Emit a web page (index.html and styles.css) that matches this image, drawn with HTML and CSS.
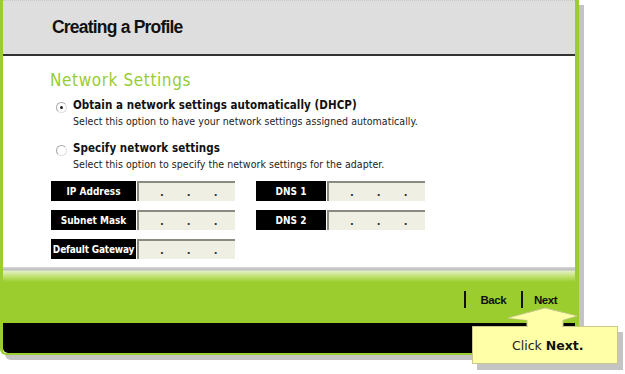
FILE: index.html
```html
<!DOCTYPE html>
<html lang="en">
<head>
    <meta charset="UTF-8">
    <title>Creating a Profile</title>
    <link rel="stylesheet" href="styles.css">
</head>
<body>
    <div class="window">
        <div class="header">
            <h1>Creating a Profile</h1>
        </div>
        <div class="content">
            <h2>Network Settings</h2>
            <div class="option">
                <span class="radio checked"></span>
                <div>
                    <div class="opt-title">Obtain a network settings automatically (DHCP)</div>
                    <div class="opt-desc">Select this option to have your network settings assigned automatically.</div>
                </div>
            </div>
            <div class="option">
                <span class="radio"></span>
                <div>
                    <div class="opt-title">Specify network settings</div>
                    <div class="opt-desc">Select this option to specify the network settings for the adapter.</div>
                </div>
            </div>
            <div class="fields">
                <div class="field">
                    <span class="label wide">IP Address</span>
                    <span class="ip"><i>.</i><i>.</i><i>.</i></span>
                </div>
                <div class="field">
                    <span class="label narrow">DNS 1</span>
                    <span class="ip"><i>.</i><i>.</i><i>.</i></span>
                </div>
                <div class="field">
                    <span class="label wide">Subnet Mask</span>
                    <span class="ip"><i>.</i><i>.</i><i>.</i></span>
                </div>
                <div class="field">
                    <span class="label narrow">DNS 2</span>
                    <span class="ip"><i>.</i><i>.</i><i>.</i></span>
                </div>
                <div class="field">
                    <span class="label wide tight">Default Gateway</span>
                    <span class="ip"><i>.</i><i>.</i><i>.</i></span>
                </div>
            </div>
        </div>
        <div class="footer">
            <div class="nav">
                <span class="sep"></span>
                <a class="nav-link">Back</a>
                <span class="sep"></span>
                <a class="nav-link">Next</a>
            </div>
        </div>
        <div class="bottom-bar"></div>
    </div>

    <!-- callout pointing at the Next button -->
    <svg class="callout-arrow" width="80" height="24" viewBox="0 0 80 24">
        <polygon points="37,1 0,11 19,13 19,22 55,22 55,13 69,9" fill="#ffffa8" stroke="#c8c890" stroke-width="1"/>
    </svg>
    <div class="callout">Click <b>Next.</b></div>
    <svg class="callout-arrow fill-only" width="80" height="24" viewBox="0 0 80 24">
        <polygon points="37,2 2,11 20,13 20,24 54,24 54,13 67,9" fill="#ffffa8"/>
    </svg>
</body>
</html>
```

FILE: styles.css
```css
* {
    margin: 0;
    padding: 0;
    box-sizing: border-box;
}

body {
    background: #fff;
    font-family: 'DejaVu Sans', Verdana, sans-serif;
    position: relative;
    width: 625px;
    height: 374px;
    overflow: hidden;
}

.window {
    width: 579px;
    border-left: 3px solid #9ccd2f;
    border-right: 4px solid #9ccd2f;
    border-bottom: 2px solid #9ccd2f;
    border-bottom-left-radius: 6px;
    box-shadow: 5px 5px 0 #c4c4c4;
    background: #fff;
    overflow: hidden;
}

.header {
    height: 56px;
    background: #dedede;
    border-top: 1px dotted #c8c8c8;
    border-bottom: 2px solid #333;
    padding: 16px 0 0 49px;
}

h1 {
    font-family: 'Liberation Sans', Arial, sans-serif;
    font-size: 17.5px;
    letter-spacing: -0.8px;
    font-weight: bold;
    color: #111;
}

.content {
    height: 211px;
    padding: 13px 0 0 47px;
}

h2 {
    font-family: 'DejaVu Sans Condensed', 'DejaVu Sans', sans-serif;
    font-weight: normal;
    font-size: 17px;
    letter-spacing: 0.6px;
    color: #99cc33;
    line-height: 22px;
    margin-bottom: 7px;
}

.option {
    display: flex;
    gap: 6px;
    margin-bottom: 13px;
}

.radio {
    width: 11px;
    height: 11px;
    border-radius: 50%;
    border: 1px solid #a8a8a8;
    border-right-color: #e0e0e0;
    border-bottom-color: #e0e0e0;
    background: #fff;
    margin: 4px 0 0 6px;
    display: flex;
    align-items: center;
    justify-content: center;
}

.radio.checked::after {
    content: '';
    width: 3px;
    height: 3px;
    border-radius: 50%;
    background: #222;
}

.opt-title {
    font-family: 'DejaVu Sans Condensed', 'DejaVu Sans', sans-serif;
    font-weight: bold;
    font-size: 11.5px;
    letter-spacing: 0.06px;
    line-height: 15px;
    color: #111;
}

.opt-desc {
    font-family: 'DejaVu Sans Condensed', 'DejaVu Sans', sans-serif;
    font-size: 10.5px;
    letter-spacing: 0.05px;
    line-height: 14px;
    padding-top: 1px;
    color: #222;
}

.fields {
    display: grid;
    grid-template-columns: 205px 170px;
    row-gap: 9px;
    margin: -3px 0 0 1px;
}

.field {
    display: flex;
    height: 20px;
}

.label {
    background: #000;
    color: #fff;
    font-family: 'DejaVu Sans Condensed', 'DejaVu Sans', sans-serif;
    font-weight: bold;
    font-size: 10px;
    display: flex;
    align-items: center;
    justify-content: center;
    margin-right: 1px;
}

.label.wide { width: 85px; }
.label.narrow { width: 70px; }
.label.tight { letter-spacing: -0.2px; white-space: nowrap; }

.ip {
    width: 98px;
    background: #efefe3;
    border-top: 2px solid #8a8a80;
    border-left: 2px solid #8a8a80;
    display: flex;
    gap: 23px;
    padding-left: 21px;
}

.ip i {
    font-style: normal;
    font-size: 10px;
    font-weight: bold;
    color: #333;
    line-height: 20px;
}

.footer {
    height: 56px;
    background: linear-gradient(#d6d6d6 0, #bdbdbd 3px, #e2f0c4 4px, #c4e27a 9px, #9ccd2f 15px, #9ccd2f 100%);
    display: flex;
    justify-content: flex-end;
    padding: 24px 18px 0 0;
}

.nav {
    display: flex;
    align-items: flex-start;
    height: 17px;
}

.sep {
    width: 2px;
    height: 17px;
    background: #111;
}

.nav-link {
    font-family: 'Liberation Sans', Arial, sans-serif;
    font-weight: bold;
    font-size: 11.5px;
    color: #111;
    padding: 3px 15px 0 15px;
    letter-spacing: -0.5px;
}

.nav-link:last-child {
    padding-right: 0;
    padding-left: 11px;
}

.bottom-bar {
    height: 30px;
    background: #000;
    border-bottom-left-radius: 5px;
}

.callout {
    position: absolute;
    left: 472px;
    top: 326px;
    width: 146px;
    height: 38px;
    background: #ffffa8;
    border: 1px solid #c8c890;
    box-shadow: 5px 6px 0 #c4c4c4;
    font-family: 'DejaVu Sans', Verdana, sans-serif;
    font-size: 12.5px;
    color: #222;
    padding: 11px 0 0 39px;
}

.callout b {
    color: #111;
}

.callout-arrow {
    position: absolute;
    left: 508px;
    top: 307px;
}

.callout-arrow.fill-only {
    z-index: 2;
    top: 307px;
}
```
